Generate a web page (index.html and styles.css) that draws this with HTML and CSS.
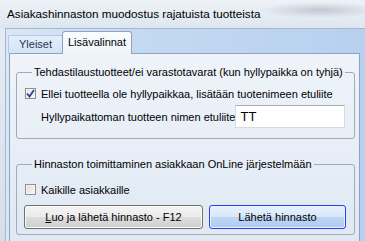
FILE: index.html
```html
<!DOCTYPE html>
<html>
<head>
<meta charset="utf-8">
<link rel="stylesheet" href="styles.css">
</head>
<body>
<div class="window">
  <div class="titlebar">Asiakashinnaston muodostus rajatuista tuotteista</div>
  <div class="client">
    <div class="tabstrip">
      <div class="tab">Yleiset</div>
      <div class="tab selected">Lisävalinnat</div>
    </div>
    <div class="page">
      <fieldset class="group group1">
        <legend>Tehdastilaustuotteet/ei varastotavarat (kun hyllypaikka on tyhjä)</legend>
        <label class="check-row">
          <span class="checkbox checked">
            <svg width="9" height="9" viewBox="0 0 9 9"><path d="M1 4.5 L3.5 7.5 L8 1" fill="none" stroke="#27448f" stroke-width="1.8"/></svg>
          </span>
          <span>Ellei tuotteella ole hyllypaikkaa, lisätään tuotenimeen etuliite</span>
        </label>
        <div class="field-row">
          <span class="field-label">Hyllypaikattoman tuotteen nimen etuliite</span>
          <div class="textbox">TT</div>
        </div>
      </fieldset>
      <fieldset class="group group2">
        <legend>Hinnaston toimittaminen asiakkaan OnLine järjestelmään</legend>
        <label class="check-row">
          <span class="checkbox"></span>
          <span>Kaikille asiakkaille</span>
        </label>
        <div class="button-row">
          <div class="button btn-create"><u>L</u>uo ja lähetä hinnasto - F12</div>
          <div class="button btn-send default">Lähetä hinnasto</div>
        </div>
      </fieldset>
    </div>
  </div>
</div>
</body>
</html>
```

FILE: styles.css
```css
html, body {
  margin: 0;
  padding: 0;
}
body {
  width: 365px;
  height: 241px;
  overflow: hidden;
  font-family: "Liberation Sans", Arial, sans-serif;
  font-size: 11px;
  color: #000;
}
.window {
  height: 241px;
  display: flex;
  flex-direction: column;
  background: linear-gradient(#e6edf5, #d5dfeb);
}
.titlebar {
  height: 28px;
  line-height: 27px;
  padding-left: 7px;
  font-size: 11.7px;
  color: #000;
  white-space: nowrap;
  background:
    radial-gradient(ellipse 60px 8px at 320px 10px, rgba(120,130,145,0.35), rgba(120,130,145,0) 100%),
    linear-gradient(#eef2f7, #dde6f0);
}
.client {
  flex: 1;
  margin-left: 5px;
  border-left: 1px solid #a9b7c9;
  border-top: 1px solid #a9b7c9;
  background: linear-gradient(to right, #d9e7f7, #c3d8f2 40%, #b8d0ef);
  display: flex;
  flex-direction: column;
  min-height: 0;
}
.tabstrip {
  height: 24px;
  display: flex;
  align-items: flex-end;
  padding-left: 2px;
  position: relative;
  z-index: 1;
}
.tab {
  height: 17px;
  line-height: 17px;
  width: 53px;
  text-align: center;
  color: #1e3656;
  border: 1px solid #b3c7e2;
  border-bottom: none;
  border-radius: 2px 2px 0 0;
  background: linear-gradient(#e3eefa, #d3e3f6);
  box-sizing: content-box;
}
.tab.selected {
  height: 22px;
  line-height: 21px;
  width: 68px;
  margin-bottom: -1px;
  margin-left: -1px;
  color: #000;
  border-color: #8ea3bf;
  border-radius: 3px 3px 0 0;
  background: linear-gradient(#fbfdff, #eff4fa);
}
.page {
  flex: 1;
  margin-left: 3px;
  margin-right: 5px;
  border: 1px solid #8ea3bf;
  border-bottom: none;
  background: linear-gradient(#eff4fa, #dfe8f3);
  padding: 11px 4px 0 6px;
}
.group {
  margin: 0;
  padding: 0 7px 0 7px;
  border: 1px solid #a5abb3;
  border-radius: 3px;
  min-width: 0;
}
.group legend {
  margin-left: 8px;
  padding: 0 2px;
  line-height: 14px;
  font-size: 11px;
  white-space: nowrap;
}
.group1 {
  padding-bottom: 10px;
}
.group1 .check-row {
  margin-top: 9px;
}
.group2 {
  margin-top: 18px;
  padding-bottom: 5px;
}
.group2 .check-row {
  margin-top: 13px;
}
.check-row {
  display: flex;
  align-items: center;
  gap: 5px;
  margin-left: 1px;
  height: 11px;
  white-space: nowrap;
}
.checkbox {
  flex: none;
  width: 9px;
  height: 9px;
  border: 1px solid #8f8f8f;
  background: linear-gradient(135deg, #dcdcdc, #f8f8f8);
  box-shadow: inset 0 0 0 1px #f4f4f4;
  display: flex;
  align-items: center;
  justify-content: center;
}
.checkbox.checked {
  background: linear-gradient(135deg, #e4e4e4, #fafafa);
}
.field-row {
  display: flex;
  align-items: center;
  margin-top: 6px;
}
.field-label {
  padding-left: 17px;
  white-space: nowrap;
}
.textbox {
  height: 23px;
  line-height: 22px;
  margin-left: auto;
  margin-right: 2px;
  border: 1px solid #d5dbe3;
  border-top-color: #abadb3;
  background: #fff;
  padding-left: 4px;
  font-size: 13px;
  box-sizing: border-box;
  width: 164px;
}
.button-row {
  display: flex;
  gap: 6px;
  margin-top: 10px;
}
.button {
  height: 22px;
  line-height: 22px;
  border-radius: 3px;
  text-align: center;
  font-size: 11px;
  white-space: nowrap;
}
.btn-create {
  width: 177px;
  border: 1px solid #707070;
  background: linear-gradient(#f4f4f4 0%, #ebebeb 48%, #dddddd 52%, #cfcfcf 100%);
  box-shadow: inset 0 0 0 1px #fbfbfb;
}
.btn-send {
  width: 135px;
  border: 1px solid #2e3ff0;
  background: linear-gradient(#e6f1fc 0%, #d8e8fa 48%, #bed6f4 52%, #afcaf0 100%);
  box-shadow: inset 0 0 0 1px #eaf2fd;
}
```
